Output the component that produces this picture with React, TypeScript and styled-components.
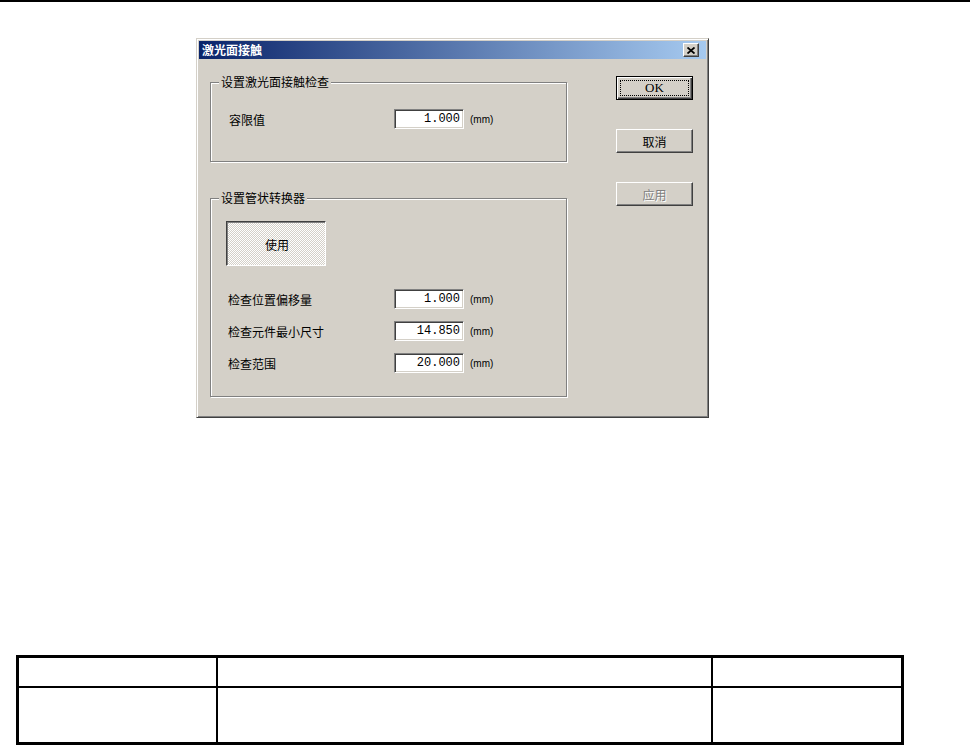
import React from 'react';
import styled, { createGlobalStyle, css } from 'styled-components';

const GlobalStyle = createGlobalStyle`
  html, body {
    margin: 0;
    padding: 0;
    background: #fff;
  }
  body {
    font-family: "Noto Sans CJK SC", "Liberation Sans", sans-serif;
    font-size: 12px;
    color: #000;
  }
`;

const face = '#d4d0c8';
const shadow = '#808080';
const darkShadow = '#404040';

const Page = styled.div`
    width: 970px;
    height: 745px;
    overflow: hidden;
    display: flex;
    flex-direction: column;
`;

const TopRule = styled.div`
    height: 2px;
    background: #000;
`;

const Dialog = styled.div`
    margin: 36px 0 0 196px;
    width: 513px;
    height: 380px;
    box-sizing: border-box;
    background: ${face};
    border: 1px solid;
    border-color: ${face} ${darkShadow} ${darkShadow} ${face};
    box-shadow: inset 1px 1px 0 #fff, inset -1px -1px 0 ${shadow};
    padding: 2px;
    display: flex;
    flex-direction: column;
`;

const TitleBar = styled.div`
    height: 18px;
    flex: none;
    display: flex;
    align-items: center;
    justify-content: space-between;
    padding: 0 7px 0 3px;
    background: linear-gradient(to right, #0a246a, #a6caf0);
`;

const TitleText = styled.span`
    color: #fff;
    font-weight: bold;
    font-size: 12px;
    line-height: 18px;
`;

const CloseButton = styled.div`
    width: 16px;
    height: 14px;
    box-sizing: border-box;
    background: ${face};
    border: 1px solid;
    border-color: #fff ${darkShadow} ${darkShadow} #fff;
    box-shadow: inset -1px -1px 0 ${shadow};
    display: flex;
    align-items: center;
    justify-content: center;
`;

const Body = styled.div`
    flex: 1;
    display: flex;
    align-items: flex-start;
    gap: 49px;
    padding: 16px 12px 0 11px;
`;

const LeftColumn = styled.div`
    width: 357px;
    display: flex;
    flex-direction: column;
    gap: 29px;
`;

const Group = styled.fieldset`
    margin: 0;
    padding: 0;
    min-width: 0;
    border: 1px solid ${shadow};
    box-shadow: 1px 1px 0 #fff, inset 1px 1px 0 #fff;
`;

const Legend = styled.legend`
    margin-left: 8px;
    padding: 0 2px;
    line-height: 14px;
    background: ${face};
`;

const GroupBody = styled.div<{ $pad: string }>`
    padding: ${({ $pad }) => $pad};
    display: flex;
    flex-direction: column;
    align-items: flex-start;
`;

const FieldList = styled.div`
    display: flex;
    flex-direction: column;
    gap: 12px;
    margin-top: 23px;
`;

const FieldRow = styled.div`
    display: flex;
    align-items: center;
    height: 20px;
`;

const FieldLabel = styled.span<{ $width: number }>`
    width: ${({ $width }) => $width}px;
    padding-left: 2px;
    box-sizing: border-box;
`;

const NumberBox = styled.div`
    width: 70px;
    height: 20px;
    box-sizing: border-box;
    background: #fff;
    border: 1px solid;
    border-color: ${shadow} #fff #fff ${shadow};
    box-shadow: inset 1px 1px 0 ${darkShadow}, inset -1px -1px 0 ${face};
    text-align: right;
    padding-right: 3px;
    font-family: "Liberation Mono", monospace;
    font-size: 12px;
    line-height: 18px;
`;

const Unit = styled.span`
    margin-left: 6px;
    font-family: "Liberation Sans", sans-serif;
    font-size: 10px;
`;

const ToggleButton = styled.div<{ $pressed?: boolean }>`
    width: 100px;
    height: 45px;
    box-sizing: border-box;
    display: flex;
    align-items: center;
    justify-content: center;
    border: 1px solid;
    ${({ $pressed }) =>
        $pressed
            ? css`
                  border-color: ${darkShadow} #fff #fff ${darkShadow};
                  box-shadow: inset 1px 1px 0 ${shadow};
                  background-color: ${face};
                  background-image: repeating-conic-gradient(#fff 0 25%, ${face} 0 50%);
                  background-size: 2px 2px;
                  padding: 2px 0 0 2px;
              `
            : css`
                  border-color: #fff ${darkShadow} ${darkShadow} #fff;
                  box-shadow: inset -1px -1px 0 ${shadow};
                  background: ${face};
              `}
`;

const ButtonColumn = styled.div`
    width: 77px;
    margin-top: 1px;
    display: flex;
    flex-direction: column;
    gap: 29px;
`;

const PushButton = styled.div<{ $default?: boolean; $disabled?: boolean }>`
    position: relative;
    height: 24px;
    box-sizing: border-box;
    display: flex;
    align-items: center;
    justify-content: center;
    background: ${face};
    border: 1px solid;
    border-color: #fff ${darkShadow} ${darkShadow} #fff;
    box-shadow: inset -1px -1px 0 ${shadow};
    color: ${({ $disabled }) => ($disabled ? shadow : '#000')};
    text-shadow: ${({ $disabled }) => ($disabled ? '1px 1px 0 #fff' : 'none')};

    ${({ $default }) =>
        $default &&
        css`
            border-color: #000;
            box-shadow: inset 1px 1px 0 #fff, inset -1px -1px 0 ${darkShadow}, inset -2px -2px 0 ${shadow};
            font-family: "Liberation Serif", serif;
            font-size: 13px;

            &::after {
                content: '';
                position: absolute;
                inset: 3px;
                border: 1px dotted #000;
            }
        `}
`;

const Table = styled.div`
    margin: 237px 0 0 16px;
    width: 888px;
    height: 90px;
    box-sizing: border-box;
    border: 3px solid #000;
    display: grid;
    grid-template-columns: 197px 495px 1fr;
    grid-template-rows: 28px 56px;
`;

const Cell = styled.div<{ $first?: boolean; $body?: boolean }>`
    border-left: ${({ $first }) => ($first ? 'none' : '2px solid #000')};
    border-top: ${({ $body }) => ($body ? '2px solid #000' : 'none')};
`;

const CloseIcon = () => (
    <svg width="8" height="7" viewBox="0 0 8 7" aria-hidden="true">
        <path d="M0.5 0.5 L7.5 6.5 M7.5 0.5 L0.5 6.5" stroke="#000" strokeWidth="1.8" />
    </svg>
);

const fields = [
    { label: '检查位置偏移量', value: '1.000' },
    { label: '检查元件最小尺寸', value: '14.850' },
    { label: '检查范围', value: '20.000' },
];

const App: React.FC = () => {
    return (
        <Page>
            <GlobalStyle />
            <TopRule />
            <Dialog>
                <TitleBar>
                    <TitleText>激光面接触</TitleText>
                    <CloseButton>
                        <CloseIcon />
                    </CloseButton>
                </TitleBar>
                <Body>
                    <LeftColumn>
                        <Group>
                            <Legend>设置激光面接触检查</Legend>
                            <GroupBody $pad="20px 16px 32px 16px">
                                <FieldRow>
                                    <FieldLabel $width={167}>容限值</FieldLabel>
                                    <NumberBox>1.000</NumberBox>
                                    <Unit>(mm)</Unit>
                                </FieldRow>
                            </GroupBody>
                        </Group>
                        <Group>
                            <Legend>设置管状转换器</Legend>
                            <GroupBody $pad="16px 16px 23px 15px">
                                <ToggleButton $pressed>使用</ToggleButton>
                                <FieldList>
                                    {fields.map((f) => (
                                        <FieldRow key={f.label}>
                                            <FieldLabel $width={168}>{f.label}</FieldLabel>
                                            <NumberBox>{f.value}</NumberBox>
                                            <Unit>(mm)</Unit>
                                        </FieldRow>
                                    ))}
                                </FieldList>
                            </GroupBody>
                        </Group>
                    </LeftColumn>
                    <ButtonColumn>
                        <PushButton $default>OK</PushButton>
                        <PushButton>取消</PushButton>
                        <PushButton $disabled>应用</PushButton>
                    </ButtonColumn>
                </Body>
            </Dialog>
            <Table>
                <Cell $first />
                <Cell />
                <Cell />
                <Cell $first $body />
                <Cell $body />
                <Cell $body />
            </Table>
        </Page>
    );
};

export default App;
